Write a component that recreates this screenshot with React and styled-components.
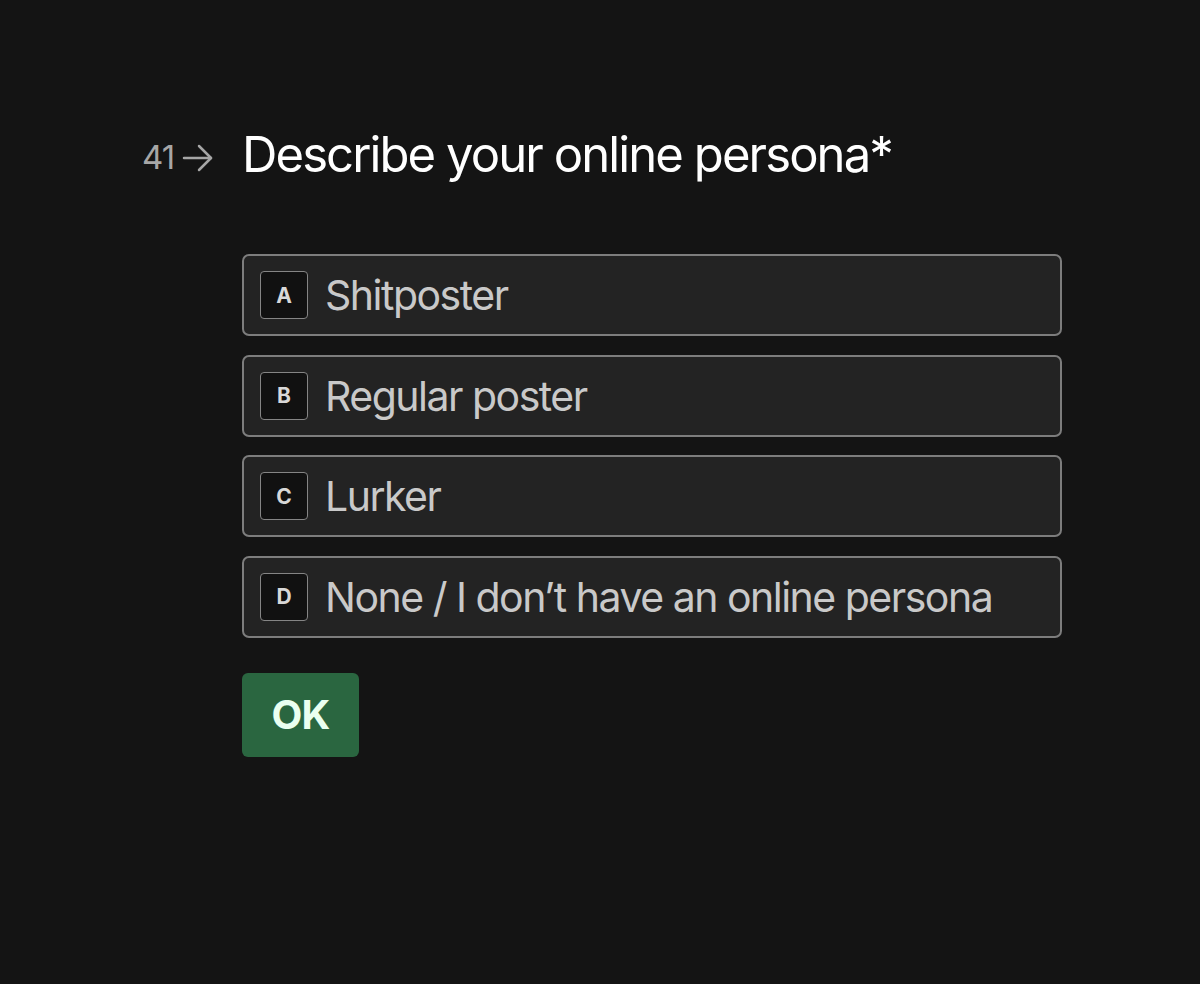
import React, { useState } from "react";
import styled, { createGlobalStyle } from "styled-components";

const GlobalStyle = createGlobalStyle`
  html, body {
    margin: 0;
    padding: 0;
    background: #141414;
    font-family: Inter, "Noto Sans", sans-serif;
  }
`;

const Page = styled.div`
  min-height: 984px;
  padding: 124px 0 0 142px;
  box-sizing: border-box;
`;

const QuestionRow = styled.div`
  display: flex;
  align-items: flex-start;
`;

const Counter = styled.div`
  display: flex;
  align-items: center;
  width: 100px;
  padding-top: 13px;
  color: #a6a6a6;
  font-size: 33px;
  letter-spacing: -1px;
  gap: 8px;
  svg {
    margin-top: 1px;
  }
`;

const Body = styled.div`
  display: flex;
  flex-direction: column;
`;

const Title = styled.h1`
  margin: 0;
  font-size: 49px;
  font-weight: 400;
  color: #ffffff;
  letter-spacing: -1.9px;
  line-height: 62px;
`;

const Options = styled.div`
  display: flex;
  flex-direction: column;
  gap: 18.5px;
  margin-top: 68px;
  width: 820px;
`;

const Option = styled.button`
  display: flex;
  align-items: center;
  gap: 18px;
  height: 82px;
  padding: 0 16px;
  box-sizing: border-box;
  background: ${p => (p.selected ? "#2c2c2c" : "#232323")};
  border: 2px solid #7d7d7d;
  border-radius: 7px;
  cursor: pointer;
  text-align: left;
  font-family: inherit;
`;

const Key = styled.span`
  display: flex;
  align-items: center;
  justify-content: center;
  width: 48px;
  height: 48px;
  box-sizing: border-box;
  background: #111111;
  border: 1.5px solid #858585;
  border-radius: 4px;
  color: #d8d8d8;
  font-size: 21px;
  font-weight: 700;
`;

const Label = styled.span`
  color: #c9c9c9;
  font-size: 41px;
  letter-spacing: -1.5px;
  margin-left: -1px;
`;

const OkButton = styled.button`
  margin-top: 35px;
  width: 117px;
  height: 84px;
  border: none;
  border-radius: 6px;
  background: #2a6640;
  color: #eafff0;
  font-family: inherit;
  font-size: 40px;
  font-weight: 700;
  letter-spacing: -0.8px;
  cursor: pointer;
`;

const choices = [
  ["A", "Shitposter"],
  ["B", "Regular poster"],
  ["C", "Lurker"],
  ["D", "None / I don\u2019t have an online persona"],
];

const Arrow = () => (
  <svg width="32" height="28" viewBox="0 0 32 28" fill="none" stroke="#a6a6a6" strokeWidth="2.5" strokeLinecap="round" strokeLinejoin="round">
    <path d="M2 14 H29" />
    <path d="M17 2 L29 14 L17 26" />
  </svg>
);

const App = () => {
  const [selected, setSelected] = useState(null);

  return (
    <Page>
      <GlobalStyle />
      <QuestionRow>
        <Counter>
          41
          <Arrow />
        </Counter>
        <Body>
          <Title>Describe your online persona*</Title>
          <Options>
            {choices.map(([key, label]) => (
              <Option key={key} selected={selected === key} onClick={() => setSelected(key)}>
                <Key>{key}</Key>
                <Label>{label}</Label>
              </Option>
            ))}
          </Options>
          <OkButton>OK</OkButton>
        </Body>
      </QuestionRow>
    </Page>
  );
};

export default App;
